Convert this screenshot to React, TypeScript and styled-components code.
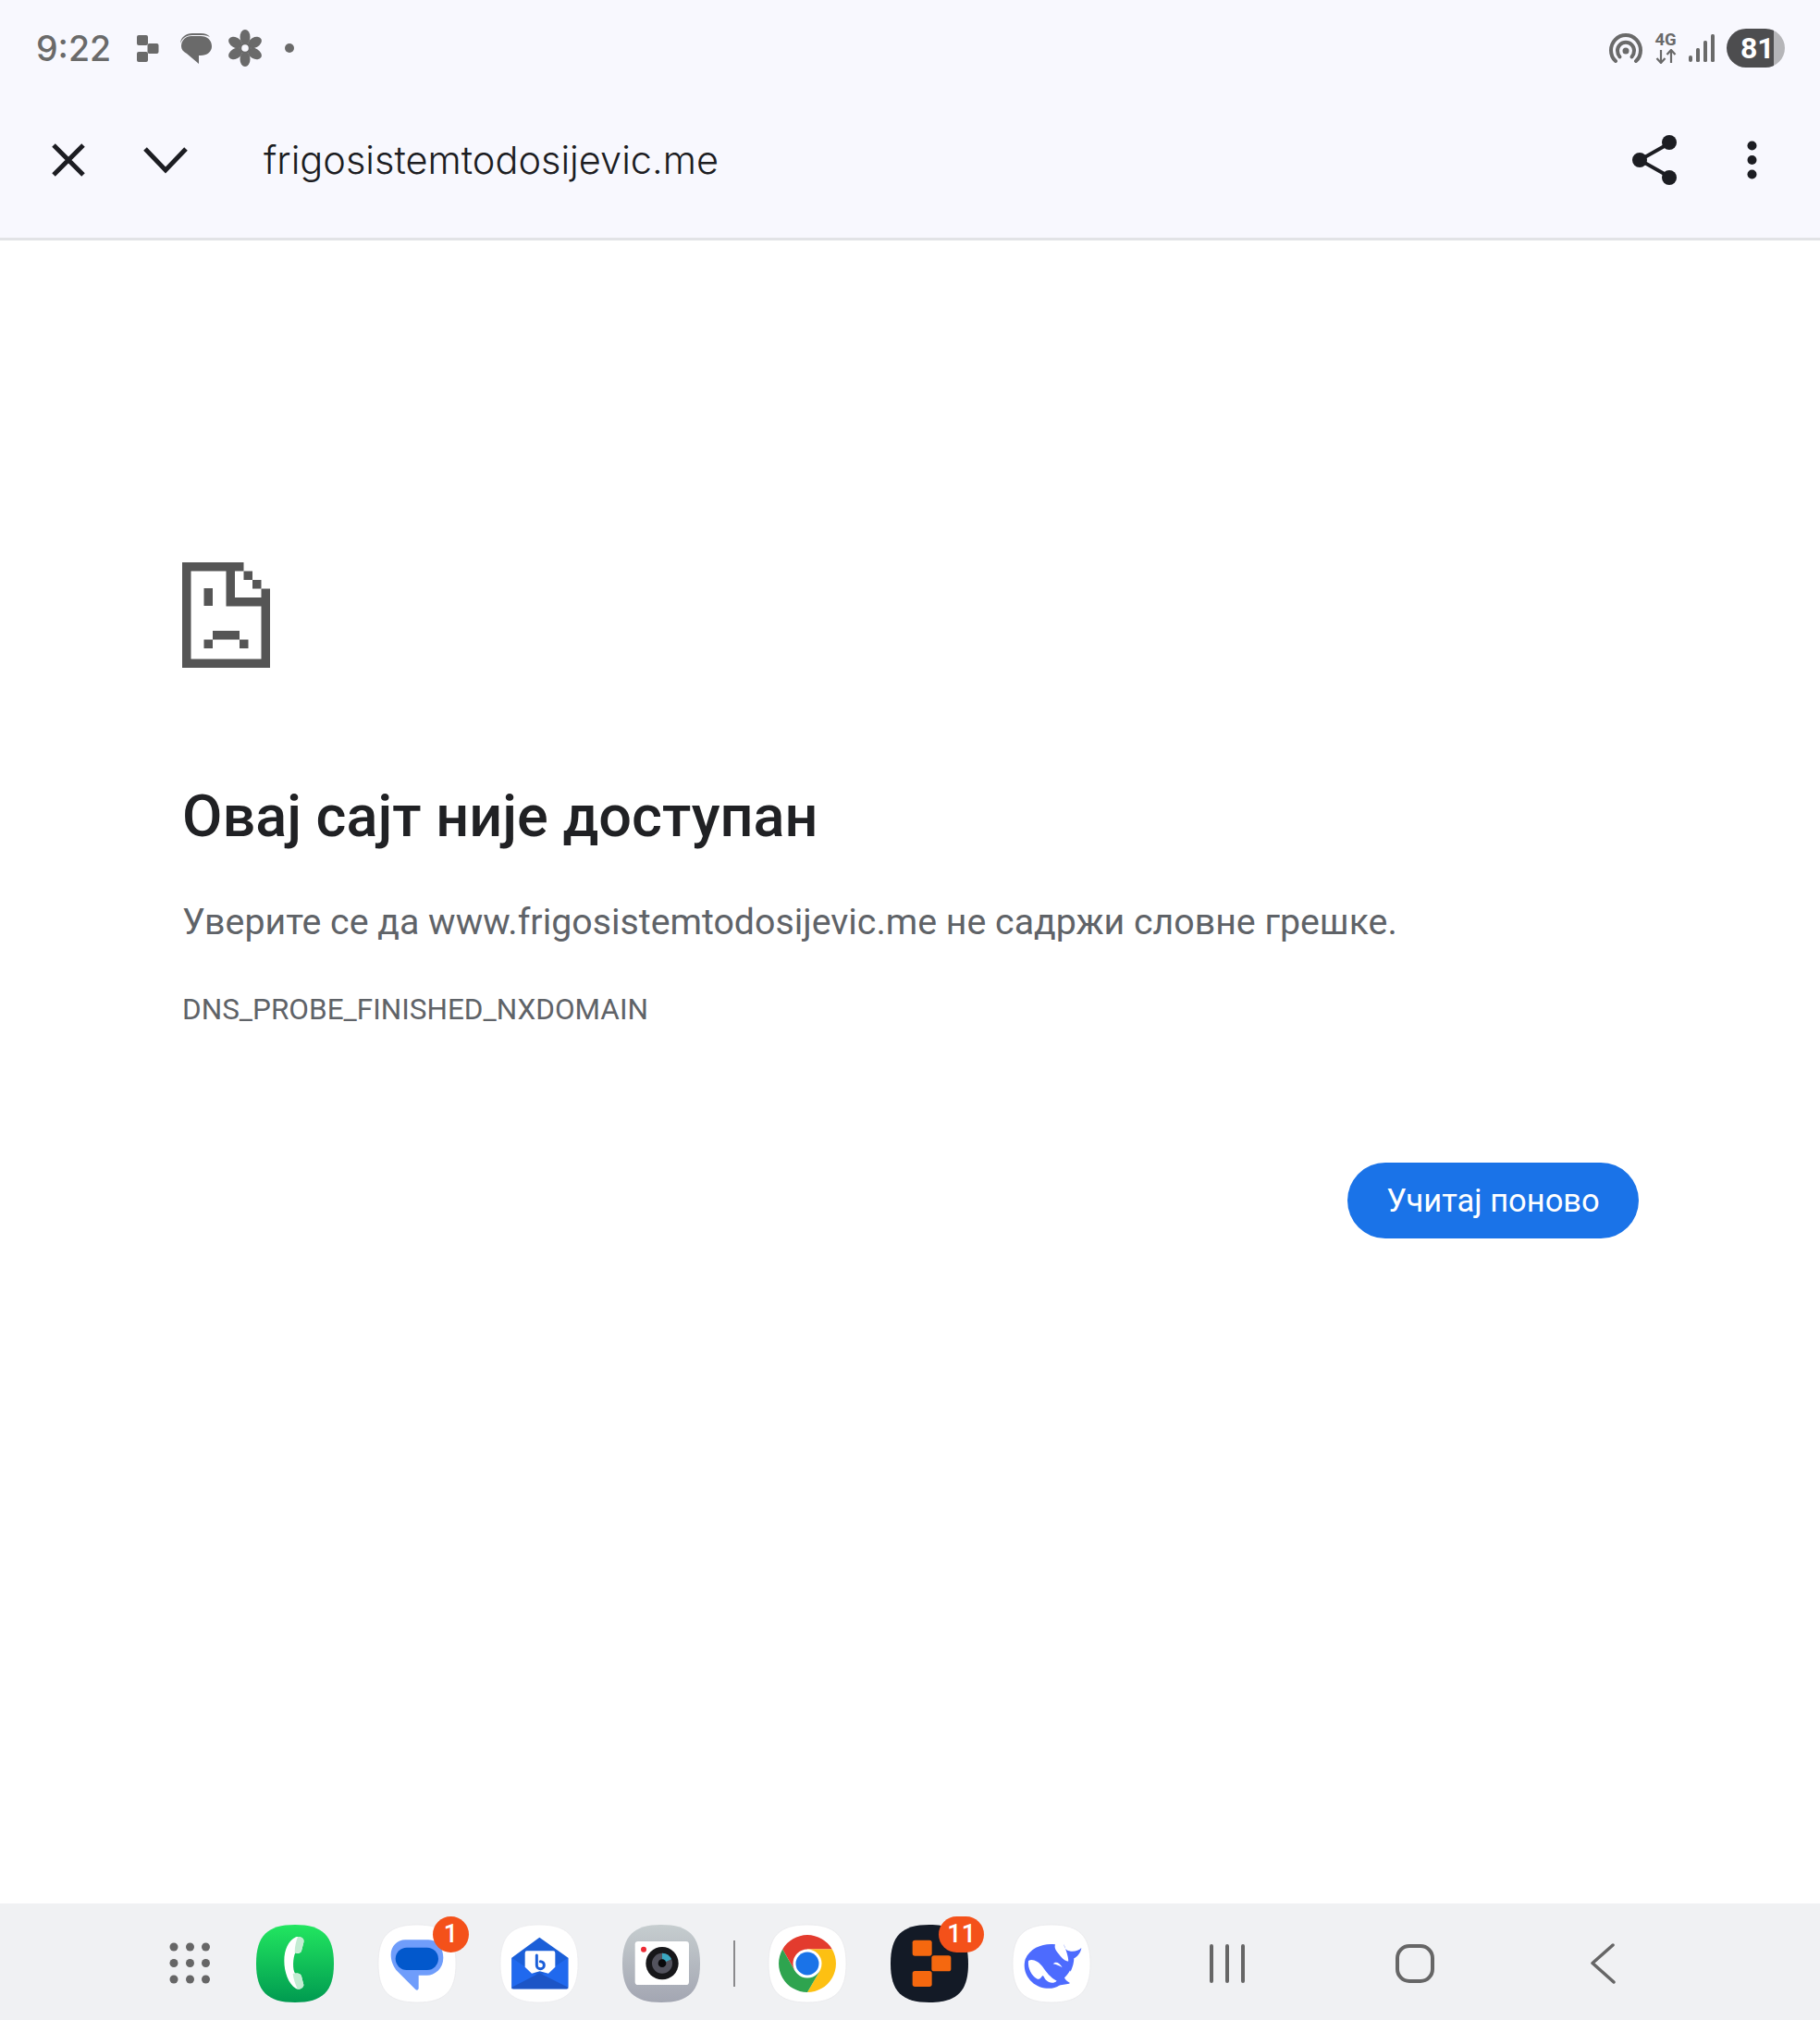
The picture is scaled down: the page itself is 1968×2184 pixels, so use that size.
import styled, { createGlobalStyle } from 'styled-components';

const GlobalStyle = createGlobalStyle`
  html,
  body {
    margin: 0;
    padding: 0;
    background: #ffffff;
  }
  * {
    box-sizing: border-box;
  }
`;

const SQUIRCLE = 'M126 0C216 0 252 36 252 126C252 216 216 252 126 252C36 252 0 216 0 126C0 36 36 0 126 0Z';

const App = () => {
  return (
    <StyledPage>
      <GlobalStyle />
      <StyledHeader>
        <StyledStatusBar>
          <StyledStatusLeft>
            <StyledTime>9:22</StyledTime>
            <StyledStatusIcon width='24' height='29' viewBox='0 0 24 29' $left={28}>
              <rect x='0' y='0' width='12' height='11' rx='2' />
              <rect x='11.5' y='9' width='12' height='11' rx='2' />
              <rect x='0' y='18' width='12' height='11' rx='2' />
            </StyledStatusIcon>
            <StyledStatusIcon width='36' height='35' viewBox='0 0 36 35' $left={22}>
              <path d='M1 12C1.5 5 7 1 14 1H23C28 1 31 2.500 33 5C29 3 26 3 23 3H14C8 3 3 6 1 12Z' />
              <path d='M13 4H23C30 4 35 8.500 35 15C35 21 30 25 23 25H21V34L8 23C4 21 2 18 2 15C2 8.500 7 4 13 4Z' />
            </StyledStatusIcon>
            <StyledStatusIcon width='38' height='40' viewBox='-19 -20 38 40' $left={16}>
              {[0, 60, 120, 180, 240, 300].map((angle) => (
                <ellipse key={angle} cx='0' cy='-12' rx='5.500' ry='8' transform={`rotate(${angle})`} />
              ))}
              <circle r='6' />
              <circle r='3.800' fill='#f8f8fe' />
            </StyledStatusIcon>
            <StyledStatusDot />
          </StyledStatusLeft>
          <StyledStatusRight>
            <StyledStatusIcon width='36' height='32' viewBox='0 0 36 32'>
              <g fill='none' stroke='#6a6a6a' strokeWidth='4' strokeLinecap='round'>
                <path d='M7 30C3.500 27 2 23 2 18.500C2 9.500 9 2 18 2C27 2 34 9.500 34 18.500C34 23 32.500 27 29 30' />
                <path d='M11.500 25.500C9.800 23.500 9 21.300 9 18.800C9 13.700 13 9.700 18 9.700C23 9.700 27 13.700 27 18.800C27 21.300 26.200 23.500 24.500 25.500' />
              </g>
              <circle cx='18' cy='19' r='3.500' />
            </StyledStatusIcon>
            <StyledNetwork>
              <StyledNetworkLabel>4G</StyledNetworkLabel>
              <svg width='24' height='16' viewBox='0 0 24 16'>
                <g fill='none' stroke='#6a6a6a' strokeWidth='2.200'>
                  <path d='M7 1V15M2.500 10L7 15L11.500 10' />
                  <path d='M18 15V1M13.500 6L18 1L22.500 6' />
                </g>
              </svg>
            </StyledNetwork>
            <StyledStatusIcon width='28' height='30' viewBox='0 0 28 30'>
              <rect x='0' y='23' width='4' height='7' rx='2' />
              <rect x='8' y='15' width='4' height='15' rx='1.500' />
              <rect x='16' y='7' width='4' height='23' rx='1.500' />
              <rect x='24' y='0' width='4' height='30' rx='1.500' />
            </StyledStatusIcon>
            <StyledBattery $level={81}>81</StyledBattery>
          </StyledStatusRight>
        </StyledStatusBar>
        <StyledToolbar>
          <StyledToolIcon width='38' height='38' viewBox='0 0 38 38' $right={62}>
            <path d='M3 3L35 35M35 3L3 35' />
          </StyledToolIcon>
          <StyledToolIcon width='48' height='30' viewBox='0 0 48 30' $right={82}>
            <path d='M2 3L24 26L46 3' />
          </StyledToolIcon>
          <StyledUrl>frigosistemtodosijevic.me</StyledUrl>
          <StyledToolIcon width='48' height='54' viewBox='0 0 48 54' $right={76}>
            <path d='M40 9L8 27L40 45' strokeWidth='4' />
            <g fill='#1c1d22' stroke='none'>
              <circle cx='40' cy='8' r='8' />
              <circle cx='8' cy='27' r='8' />
              <circle cx='40' cy='46' r='8' />
            </g>
          </StyledToolIcon>
          <StyledToolIcon width='11' height='42' viewBox='0 0 11 42' $right={0}>
            <g fill='#1c1d22' stroke='none'>
              <circle cx='5.500' cy='5.500' r='5' />
              <circle cx='5.500' cy='21' r='5' />
              <circle cx='5.500' cy='36.500' r='5' />
            </g>
          </StyledToolIcon>
        </StyledToolbar>
      </StyledHeader>

      <StyledMain>
        <StyledSadFile width='95' height='114' viewBox='0 0 95 114'>
          <path
            fillRule='evenodd'
            d='M0 0H66.500V9.500H57V38H85.500V28.500H95V114H0ZM9.500 9.500V104.500H85.500V47.500H47.500V9.500Z'
          />
          <rect x='66.500' y='9.500' width='9.500' height='9.500' />
          <rect x='76' y='19' width='9.500' height='9.500' />
          <rect x='23.500' y='28' width='9.500' height='19' />
          <rect x='33' y='74' width='29' height='9.500' />
          <rect x='23.500' y='83.500' width='9.500' height='9.500' />
          <rect x='62' y='83.500' width='9.500' height='9.500' />
        </StyledSadFile>
        <StyledTitle>Овај сајт није доступан</StyledTitle>
        <StyledMessage>Уверите се да www.frigosistemtodosijevic.me не садржи словне грешке.</StyledMessage>
        <StyledErrorCode>DNS_PROBE_FINISHED_NXDOMAIN</StyledErrorCode>
        <StyledActions>
          <StyledReloadButton>Учитај поново</StyledReloadButton>
        </StyledActions>
      </StyledMain>

      <StyledDock>
        <StyledApps>
          <StyledAppGrid width='46' height='46' viewBox='0 0 46 46'>
            {[5, 22.5, 40].map((cy) =>
              [5, 22.5, 39.5].map((cx) => <circle key={`${cx}-${cy}`} cx={cx} cy={cy} r='4.500' />),
            )}
          </StyledAppGrid>
          <StyledAppSlot>
            <StyledAppIcon viewBox='21 33 252 252'>
              <defs>
                <linearGradient id='phoneGreen' x1='0' y1='0' x2='0' y2='1'>
                  <stop offset='0' stopColor='#22e660' />
                  <stop offset='1' stopColor='#009a50' />
                </linearGradient>
              </defs>
              <path d={SQUIRCLE} transform='translate(21 33)' fill='url(#phoneGreen)' />
              <path
                d='M150 73C165 70 178 78 175 90L168 118C166 126 155 128 148 124C140 140 138 180 148 192C155 188 165 192 168 200L175 228C175 238 160 245 150 240C125 225 112 185 112 150C112 115 125 85 150 73Z'
                fill='#ffffff'
              />
              <path
                d='M156 72C170 72 178 78 175 90L168 118C166 126 152 127 146 123C146 105 150 88 156 72Z'
                fill='#c4ecd3'
              />
              <path
                d='M140 192C148 188 165 190 168 200L175 228C175 238 163 244 155 242C148 225 142 210 140 192Z'
                fill='#c4ecd3'
              />
            </StyledAppIcon>
          </StyledAppSlot>
          <StyledAppSlot>
            <StyledAppIcon viewBox='27 48 252 252'>
              <path d={SQUIRCLE} transform='translate(27 48)' fill='#ffffff' stroke='#e6e6e9' strokeWidth='2' />
              <path
                d='M115 97H190C220 97 238 125 238 155C238 190 210 212 185 212H158V255Q155 263 148 258L85 195C75 180 68 165 68 145C68 118 88 97 115 97Z'
                fill='#6f9dfb'
              />
              <rect x='83' y='122' width='139' height='73' rx='36.500' fill='#0258cc' />
            </StyledAppIcon>
            <StyledBadge $right={-14}>1</StyledBadge>
          </StyledAppSlot>
          <StyledAppSlot>
            <StyledAppIcon viewBox='30 33 252 252'>
              <path d={SQUIRCLE} transform='translate(30 33)' fill='#ffffff' stroke='#e9e9ec' strokeWidth='2' />
              <path d='M157 74L250 140V233Q250 241 242 241H75Q67 241 67 233V140Z' fill='#1b5fd8' />
              <path d='M67 140L157 200L250 140V233Q250 241 242 241H75Q67 241 67 233Z' fill='#2069ee' />
              <path d='M67 236L157 190L250 236V241H67Z' fill='#1c55c6' />
              <path
                d='M116 118H202Q208 118 208 125V170L186 191L158 184L132 191L110 170V125Q110 118 116 118Z'
                fill='#ffffff'
              />
              <path
                d='M148 132V164C148 172 154 176 160 176C167 176 172 171 172 164C172 157 167 152 160 152'
                fill='none'
                stroke='#1b5fd8'
                strokeWidth='9'
                strokeLinecap='round'
              />
            </StyledAppIcon>
          </StyledAppSlot>
          <StyledAppSlot>
            <StyledAppIcon viewBox='21 33 252 252'>
              <defs>
                <linearGradient id='cameraGrey' x1='0' y1='0' x2='0' y2='1'>
                  <stop offset='0' stopColor='#c6cdcf' />
                  <stop offset='1' stopColor='#a3a6b2' />
                </linearGradient>
              </defs>
              <path d={SQUIRCLE} transform='translate(21 33)' fill='url(#cameraGrey)' />
              <rect x='62' y='87' width='175' height='141' rx='10' fill='#ffffff' />
              <circle cx='90' cy='113' r='9' fill='#ee2a35' />
              <circle cx='150' cy='158' r='53' fill='#17171a' />
              <circle cx='150' cy='158' r='33' fill='#53535e' />
              <path d='M150 125A33 33 0 0 1 180 145L150 158Z' fill='#3aa7c0' />
              <circle cx='150' cy='158' r='13' fill='#08080a' />
            </StyledAppIcon>
          </StyledAppSlot>
          <StyledDockDivider />
          <StyledAppSlot>
            <StyledAppIcon viewBox='0 0 84 84'>
              <path d={SQUIRCLE} transform='scale(0.3333)' fill='#ffffff' stroke='#e6e6e9' strokeWidth='2' />
              <path d='M15.200 26.500A31 31 0 0 1 68.800 26.500H42L28.600 50Z' fill='#e33b2e' />
              <path d='M68.800 26.500A31 31 0 0 1 42 73L55.400 50L42 26.500Z' fill='#fdc012' />
              <path d='M42 73A31 31 0 0 1 15.200 26.500L28.600 50H55.400Z' fill='#2ea44f' />
              <circle cx='42' cy='42' r='15.500' fill='#ffffff' />
              <circle cx='42' cy='42' r='12.500' fill='#1a73e8' />
            </StyledAppIcon>
          </StyledAppSlot>
          <StyledAppSlot>
            <StyledAppIcon viewBox='576 93 252 252'>
              <path d={SQUIRCLE} transform='translate(576 93)' fill='#131a26' />
              <rect x='647' y='143' width='63' height='51' rx='8' fill='#f5680f' />
              <rect x='709' y='193' width='63' height='51' rx='8' fill='#f5680f' />
              <rect x='647' y='243' width='63' height='51' rx='8' fill='#f5680f' />
            </StyledAppIcon>
            <StyledBadge $right={-17}>11</StyledBadge>
          </StyledAppSlot>
          <StyledAppSlot>
            <StyledAppIcon viewBox='27 33 252 252'>
              <path d={SQUIRCLE} transform='translate(27 33)' fill='#ffffff' stroke='#e6e6e9' strokeWidth='2' />
              <path
                d='M165 97C130 92 85 105 68 145C58 180 75 218 115 235C140 243 165 240 178 230C190 226 205 228 213 222C205 218 198 212 195 205C212 190 222 165 220 150C205 155 195 150 182 135C172 122 160 112 165 97Z'
                fill='#4d6bfe'
              />
              <path
                d='M193 95C195 110 200 115 210 118C225 122 240 118 250 108C248 125 235 138 226 142C226 155 222 170 215 185L205 160C212 150 205 130 193 95Z'
                fill='#4d6bfe'
              />
              <path
                d='M78 150C90 142 110 150 125 170C135 185 150 205 170 215C160 225 145 222 135 212C128 205 128 195 122 200C118 208 110 212 105 208C90 200 75 175 78 150Z'
                fill='#ffffff'
              />
              <path d='M158 160C165 150 180 155 188 172C178 165 168 162 158 160Z' fill='#ffffff' />
            </StyledAppIcon>
          </StyledAppSlot>
        </StyledApps>
        <StyledNav>
          <StyledNavSlot>
            <StyledNavIcon width='40' height='42' viewBox='0 0 40 42'>
              <path d='M3 2V40M20 2V40M37 2V40' strokeWidth='4' />
            </StyledNavIcon>
          </StyledNavSlot>
          <StyledNavSlot>
            <StyledNavIcon width='42' height='42' viewBox='0 0 42 42'>
              <rect x='2' y='2' width='38' height='38' rx='13' strokeWidth='4' />
            </StyledNavIcon>
          </StyledNavSlot>
          <StyledNavSlot>
            <StyledNavIcon width='28' height='44' viewBox='0 0 28 44'>
              <path d='M25 2L3 21.500L26 42' strokeWidth='3.500' />
            </StyledNavIcon>
          </StyledNavSlot>
        </StyledNav>
      </StyledDock>
    </StyledPage>
  );
};

const StyledPage = styled.div`
  display: flex;
  flex-direction: column;
  width: 1968px;
  height: 2184px;
  overflow: hidden;
  background: #ffffff;
  font-family: Roboto, 'Liberation Sans', sans-serif;
`;

const StyledHeader = styled.header`
  background: #f8f8fe;
  border-bottom: 3px solid #e2e3e6;
`;

const StyledStatusBar = styled.div`
  display: flex;
  align-items: center;
  justify-content: space-between;
  height: 104px;
  padding: 0 38px 0 39px;
`;

const StyledStatusLeft = styled.div`
  display: flex;
  align-items: center;
`;

const StyledStatusRight = styled.div`
  display: flex;
  align-items: center;
  gap: 13px;
`;

const StyledTime = styled.span`
  font-family: Inter, sans-serif;
  font-size: 37.5px;
  font-weight: 500;
  color: #6a6a6a;
`;

const StyledStatusIcon = styled.svg<{ $left?: number }>`
  display: block;
  margin-left: ${(props) => props.$left ?? 0}px;
  fill: #6a6a6a;
`;

const StyledStatusDot = styled.span`
  width: 10px;
  height: 10px;
  margin-left: 24px;
  border-radius: 50%;
  background: #6a6a6a;
`;

const StyledNetwork = styled.div`
  display: flex;
  flex-direction: column;
  align-items: center;
  gap: 2px;
  width: 24px;
`;

const StyledNetworkLabel = styled.span`
  height: 15px;
  font-size: 18.5px;
  font-weight: 700;
  line-height: 15px;
  color: #6a6a6a;
`;

const StyledBattery = styled.span<{ $level: number }>`
  width: 63px;
  height: 42px;
  padding-left: 15px;
  border-radius: 21px;
  background: linear-gradient(
    90deg,
    #4d4d4f ${(props) => props.$level}%,
    #b5b5b8 ${(props) => props.$level}%
  );
  color: #ffffff;
  font-size: 32px;
  font-weight: 700;
  line-height: 42px;
`;

const StyledToolbar = styled.div`
  display: flex;
  align-items: center;
  height: 153px;
  padding: 0 68px 16px 55px;
`;

const StyledToolIcon = styled.svg<{ $right: number }>`
  display: block;
  flex: none;
  margin-right: ${(props) => props.$right}px;
  fill: none;
  stroke: #1c1d22;
  stroke-width: 5;
`;

const StyledUrl = styled.div`
  flex: 1;
  margin-top: 1px;
  font-family: Inter, sans-serif;
  font-size: 41.5px;
  font-weight: 300;
  color: #1c1d22;
`;

const StyledMain = styled.main`
  flex: 1;
  padding: 348px 196px 0 197px;
`;

const StyledSadFile = styled.svg`
  display: block;
  fill: #555555;
`;

const StyledTitle = styled.h1`
  margin: 126px 0 0;
  font-size: 63px;
  font-weight: 500;
  line-height: 70px;
  color: #202124;
`;

const StyledMessage = styled.p`
  margin: 54px 0 0;
  font-size: 39.3px;
  line-height: 50px;
  color: #5f6368;
`;

const StyledErrorCode = styled.div`
  margin-top: 50px;
  font-size: 31.5px;
  line-height: 40px;
  color: #5f6368;
`;

const StyledActions = styled.div`
  display: flex;
  justify-content: flex-end;
  margin-top: 145px;
`;

const StyledReloadButton = styled.button`
  width: 315px;
  height: 82px;
  padding: 0;
  border: 0;
  border-radius: 41px;
  background: #1a73e8;
  color: #ffffff;
  font-family: inherit;
  font-size: 34.5px;
`;

const StyledDock = styled.footer`
  display: flex;
  justify-content: space-between;
  height: 126px;
  padding: 23px 134px 0 183px;
  background: #f0f1f3;
`;

const StyledApps = styled.div`
  display: flex;
  gap: 48px;
  height: 84px;
`;

const StyledAppGrid = styled.svg`
  display: block;
  align-self: center;
  fill: #666666;
`;

const StyledAppSlot = styled.div`
  position: relative;
  width: 84px;
  height: 84px;
`;

const StyledAppIcon = styled.svg`
  display: block;
  width: 84px;
  height: 84px;
  overflow: visible;
`;

const StyledBadge = styled.span<{ $right: number }>`
  position: absolute;
  top: -9px;
  right: ${(props) => props.$right}px;
  min-width: 39px;
  height: 39px;
  padding: 0 9px;
  border-radius: 20px;
  background: #f4511a;
  color: #ffffff;
  font-size: 27px;
  font-weight: 500;
  line-height: 39px;
  text-align: center;
`;

const StyledDockDivider = styled.div`
  align-self: center;
  width: 2px;
  height: 50px;
  margin: 0 -13px 0 -11px;
  background: #8a8a8c;
  transform: translateX(-1px);
`;

const StyledNav = styled.div`
  display: flex;
  height: 84px;
`;

const StyledNavSlot = styled.div`
  display: flex;
  align-items: center;
  justify-content: center;
  width: 203px;
`;

const StyledNavIcon = styled.svg`
  display: block;
  fill: none;
  stroke: #666666;
  stroke-linecap: round;
  stroke-linejoin: round;
`;

export default App;
